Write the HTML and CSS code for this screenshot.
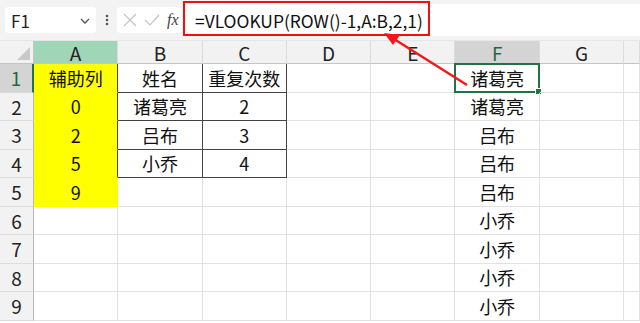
FILE: index.html
```html
<!DOCTYPE html>
<html lang="zh">
<head>
    <meta charset="UTF-8">
    <title>VLOOKUP 重复</title>
    <link rel="stylesheet" href="styles.css">
</head>
<body>

    <!-- FORMULA TOOLBAR -->
    <div class="toolbar">
        <div class="name-box">
            <span>F1</span>
            <svg class="chevron" width="10" height="6" viewBox="0 0 10 6"><polyline points="1,1 5,5 9,1" fill="none" stroke="#555" stroke-width="1.3"/></svg>
        </div>
        <svg class="dots" width="4" height="12" viewBox="0 0 4 12"><circle cx="2" cy="2" r="1.3" fill="#555"/><circle cx="2" cy="6" r="1.3" fill="#555"/><circle cx="2" cy="10" r="1.3" fill="#555"/></svg>
        <div class="fx-box">
            <svg width="14" height="14" viewBox="0 0 14 14"><path d="M1 1 L13 13 M13 1 L1 13" stroke="#c4c4c4" stroke-width="1.2"/></svg>
            <svg width="16" height="14" viewBox="0 0 16 14"><polyline points="1,7 6,12 15,2" fill="none" stroke="#c4c4c4" stroke-width="1.2"/></svg>
            <span class="fx">fx</span>
        </div>
        <div class="formula">=VLOOKUP(ROW()-1,A:B,2,1)</div>
    </div>

    <!-- SHEET -->
    <div class="sheet">
        <div class="corner"><div class="tri"></div></div>
        <div class="col-head col-sel">A</div>
        <div class="col-head">B</div>
        <div class="col-head">C</div>
        <div class="col-head">D</div>
        <div class="col-head">E</div>
        <div class="col-head col-active">F</div>
        <div class="col-head">G</div>
        <div class="col-head"></div>

        <div class="row-head row-active">1</div>
        <div class="cell yellow tb-left">辅助列</div>
        <div class="cell tb">姓名</div>
        <div class="cell tb">重复次数</div>
        <div class="cell"></div>
        <div class="cell"></div>
        <div class="cell selected">诸葛亮<span class="handle"></span></div>
        <div class="cell"></div>
        <div class="cell"></div>

        <div class="row-head">2</div>
        <div class="cell yellow tb-left">0</div>
        <div class="cell tb">诸葛亮</div>
        <div class="cell tb">2</div>
        <div class="cell"></div>
        <div class="cell"></div>
        <div class="cell">诸葛亮</div>
        <div class="cell"></div>
        <div class="cell"></div>

        <div class="row-head">3</div>
        <div class="cell yellow tb-left">2</div>
        <div class="cell tb">吕布</div>
        <div class="cell tb">3</div>
        <div class="cell"></div>
        <div class="cell"></div>
        <div class="cell">吕布</div>
        <div class="cell"></div>
        <div class="cell"></div>

        <div class="row-head">4</div>
        <div class="cell yellow tb-left">5</div>
        <div class="cell tb">小乔</div>
        <div class="cell tb">4</div>
        <div class="cell"></div>
        <div class="cell"></div>
        <div class="cell">吕布</div>
        <div class="cell"></div>
        <div class="cell"></div>

        <div class="row-head">5</div>
        <div class="cell yellow">9</div>
        <div class="cell"></div>
        <div class="cell"></div>
        <div class="cell"></div>
        <div class="cell"></div>
        <div class="cell">吕布</div>
        <div class="cell"></div>
        <div class="cell"></div>

        <div class="row-head">6</div>
        <div class="cell"></div>
        <div class="cell"></div>
        <div class="cell"></div>
        <div class="cell"></div>
        <div class="cell"></div>
        <div class="cell">小乔</div>
        <div class="cell"></div>
        <div class="cell"></div>

        <div class="row-head">7</div>
        <div class="cell"></div>
        <div class="cell"></div>
        <div class="cell"></div>
        <div class="cell"></div>
        <div class="cell"></div>
        <div class="cell">小乔</div>
        <div class="cell"></div>
        <div class="cell"></div>

        <div class="row-head">8</div>
        <div class="cell"></div>
        <div class="cell"></div>
        <div class="cell"></div>
        <div class="cell"></div>
        <div class="cell"></div>
        <div class="cell">小乔</div>
        <div class="cell"></div>
        <div class="cell"></div>

        <div class="row-head">9</div>
        <div class="cell"></div>
        <div class="cell"></div>
        <div class="cell"></div>
        <div class="cell"></div>
        <div class="cell"></div>
        <div class="cell">小乔</div>
        <div class="cell"></div>
        <div class="cell"></div>
    </div>

    <!-- annotation: red box round the formula and arrow to F1 -->
    <div class="mark-box"></div>
    <svg class="arrow" width="640" height="323" viewBox="0 0 640 323">
        <line x1="467" y1="85" x2="394" y2="39" stroke="#f01818" stroke-width="2.4"/>
        <polygon points="384,33 400,35 393,45" fill="#f01818"/>
    </svg>

</body>
</html>
```

FILE: styles.css
```css
body {
    margin: 0;
    width: 640px;
    height: 323px;
    overflow: hidden;
    background-color: #ffffff;
    font-family: "Noto Sans CJK SC", "Noto Sans", sans-serif;
    color: #111;
    position: relative;
}
.toolbar {
    height: 40px;
    background-color: #f3f3f3;
    display: flex;
    align-items: center;
    padding-left: 5px;
    border-bottom: 1px solid #e6e6e6;
}
.name-box {
    width: 91px;
    height: 26px;
    box-sizing: border-box;
    background-color: white;
    border-radius: 4px;
    display: flex;
    align-items: center;
    justify-content: space-between;
    padding: 0 6px 0 6px;
    font-size: 17px;
    color: #222;
}
.chevron {
    margin-top: 2px;
}
.dots {
    margin: 0 8px 0 9px;
}
.fx-box {
    width: 65px;
    height: 26px;
    box-sizing: border-box;
    background-color: white;
    border-radius: 4px;
    display: flex;
    align-items: center;
    gap: 7px;
    padding-left: 6px;
}
.fx {
    font-family: "Liberation Serif", serif;
    font-style: italic;
    font-size: 16px;
    color: #444;
}
.formula {
    flex: 1;
    height: 32px;
    margin-left: 2px;
    background-color: white;
    display: flex;
    align-items: center;
    padding-left: 11px;
    font-size: 17.4px;
    color: #111;
}
.sheet {
    display: grid;
    grid-template-columns: 34px repeat(7, 84.3px) 1fr;
    grid-template-rows: 23px repeat(9, 28.5px);
}
.corner, .col-head, .row-head, .cell {
    box-sizing: border-box;
    display: flex;
    align-items: center;
    justify-content: center;
    font-size: 18px;
}
.col-head, .row-head {
    font-size: 19px;
}
.corner {
    background-color: #f2f2f2;
    border-right: 1px solid #c6c6c6;
    border-bottom: 1px solid #c6c6c6;
    position: relative;
}
.tri {
    position: absolute;
    right: 3px;
    bottom: 3px;
    width: 0;
    height: 0;
    border-left: 13px solid transparent;
    border-bottom: 13px solid #c9c9c9;
}
.col-head {
    background-color: #f2f2f2;
    border-right: 1px solid #dcdcdc;
    border-bottom: 1px solid #c6c6c6;
    color: #222;
}
.col-sel {
    background-color: #9fd6b8;
}
.col-active {
    background-color: #d4d4d4;
    color: #1e6b3f;
}
.row-head {
    background-color: #f2f2f2;
    border-right: 1px solid #b8b8b8;
    border-bottom: 1px solid #dcdcdc;
    color: #222;
}
.row-active {
    background-color: #d4d4d4;
    color: #1e6b3f;
    border-right: 2px solid #217346;
}
.cell {
    border-right: 1px solid #e2e2e2;
    border-bottom: 1px solid #e2e2e2;
    color: #111;
    position: relative;
}
.yellow {
    background-color: #ffff00;
    border-color: #ffff00;
}
.tb-left {
    border-right-color: #444;
}
.tb {
    border-right-color: #444;
    border-bottom-color: #444;
}
.selected {
    border: 2px solid #217346;
    margin: -1px 0 0 -1px;
}
.handle {
    position: absolute;
    right: -4px;
    bottom: -4px;
    width: 5px;
    height: 5px;
    background-color: #217346;
    border: 1px solid white;
}
.mark-box {
    position: absolute;
    left: 183px;
    top: 1px;
    width: 247px;
    height: 35px;
    box-sizing: border-box;
    border: 2px solid #f01010;
}
.arrow {
    position: absolute;
    left: 0;
    top: 0;
    pointer-events: none;
}
```
